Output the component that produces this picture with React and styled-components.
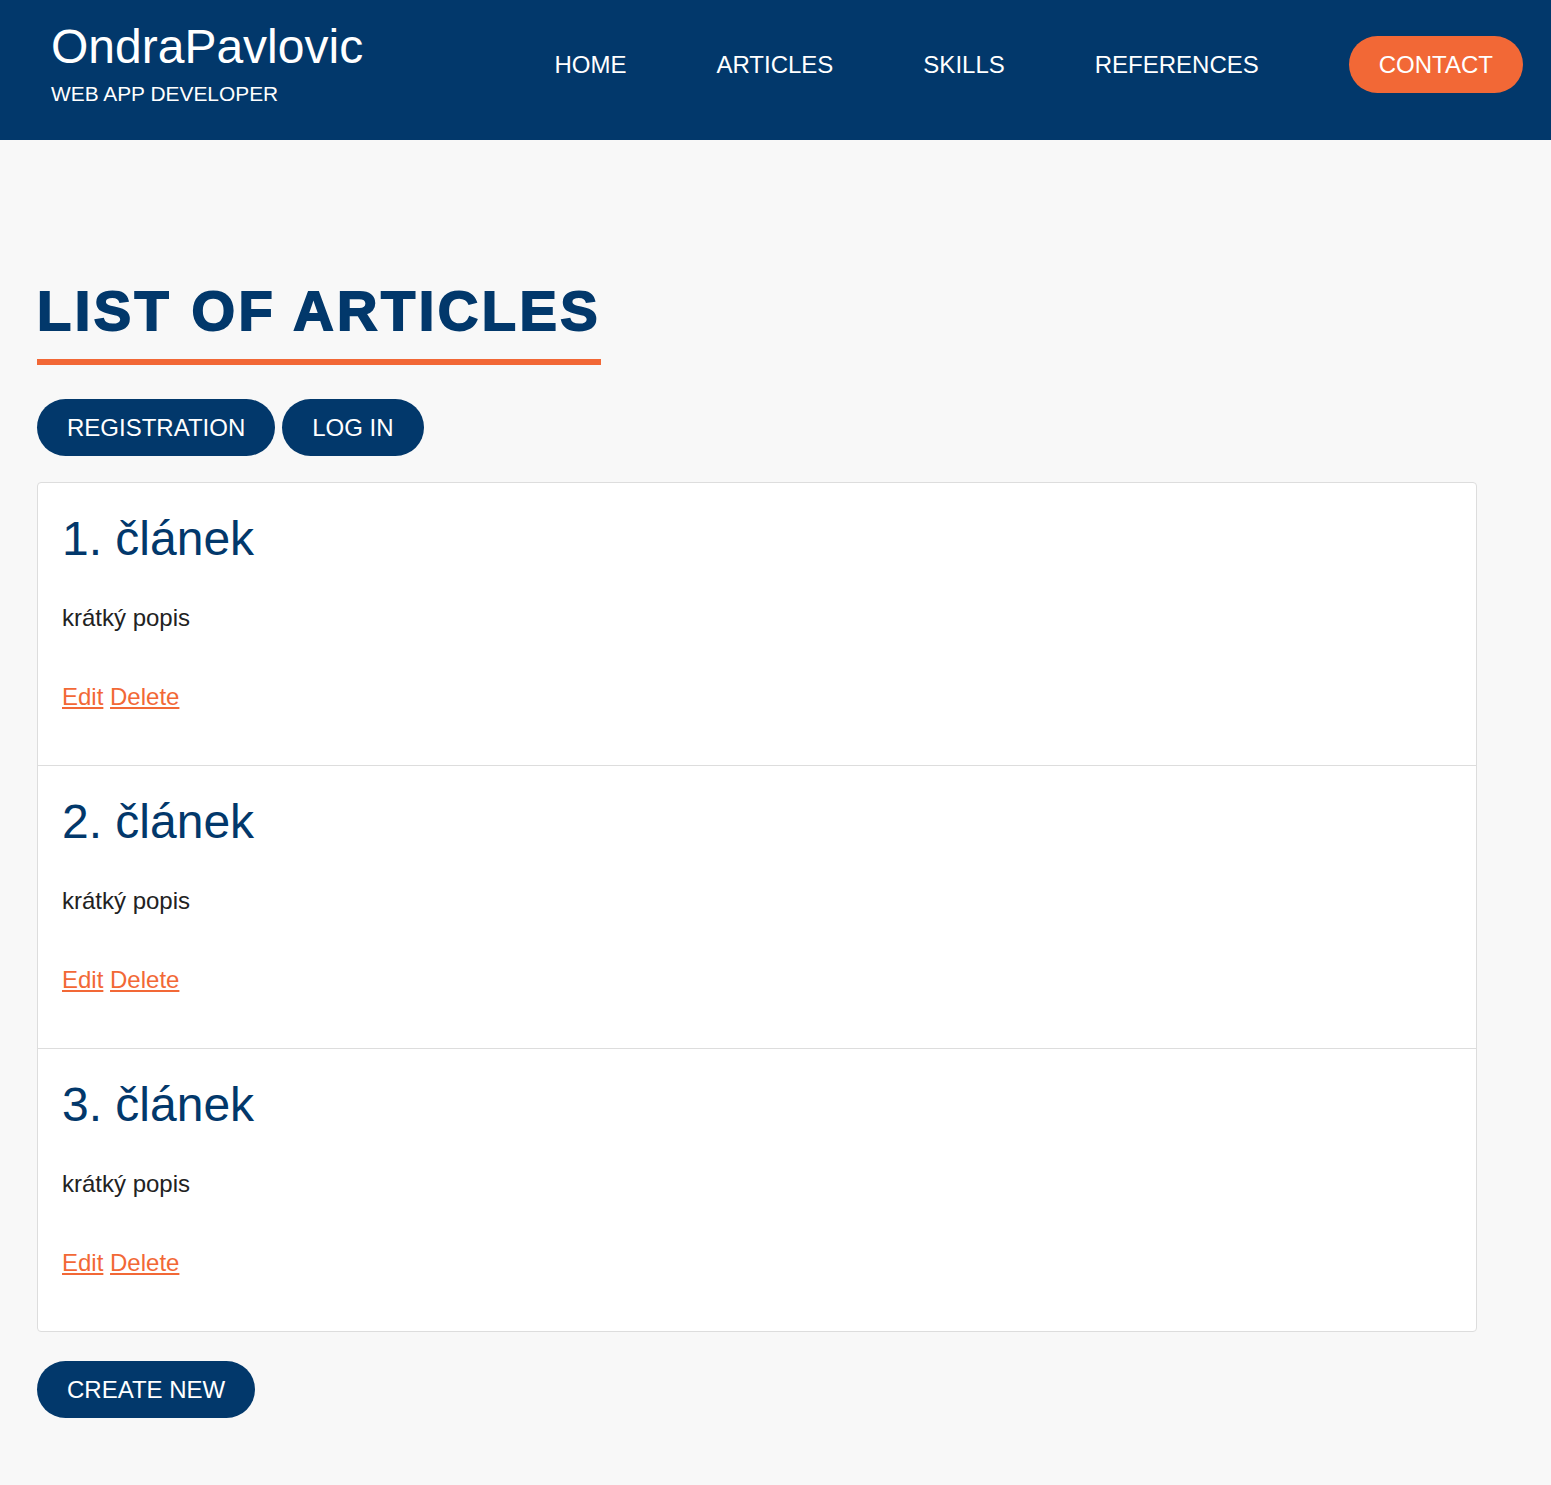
import React from 'react';
import styled, { createGlobalStyle } from 'styled-components';

const navy = '#02386b';
const orange = '#f26836';

const GlobalStyle = createGlobalStyle`
  html, body {
    margin: 0;
    padding: 0;
    background: #f8f8f8;
    font-family: "Liberation Sans", Arial, sans-serif;
  }
  * {
    box-sizing: border-box;
  }
`;

const Header = styled.header`
  display: flex;
  justify-content: space-between;
  align-items: flex-start;
  height: 140px;
  padding: 19px 28px 0 51px;
  background: ${navy};
  color: #fff;
`;

const Brand = styled.div`
  display: flex;
  flex-direction: column;
`;

const BrandName = styled.div`
  font-size: 48px;
  line-height: 55px;
`;

const BrandTag = styled.div`
  margin-top: 8px;
  font-size: 20.9px;
  line-height: 24px;
`;

const Nav = styled.nav`
  display: flex;
  align-items: center;
  gap: 90px;
  margin-top: 17px;
`;

const NavLink = styled.a`
  color: #fff;
  font-size: 24px;
  line-height: 27px;
  text-decoration: none;
`;

const Pill = styled.a`
  display: inline-block;
  padding: 15px 30px;
  border-radius: 29px;
  background: ${(p) => (p.$accent ? orange : navy)};
  color: #fff;
  font-size: 24px;
  line-height: 27px;
  text-decoration: none;
  white-space: nowrap;
`;

const Main = styled.main`
  padding: 139px 0 67px 37px;
`;

const Title = styled.h1`
  display: inline-block;
  margin: 0;
  padding-bottom: 16px;
  border-bottom: 6px solid ${orange};
  color: ${navy};
  font-size: 56px;
  line-height: 64px;
  font-weight: 900;
  letter-spacing: 3.5px;
  -webkit-text-stroke: 1.8px ${navy};
`;

const ButtonRow = styled.div`
  display: flex;
  gap: 7px;
  margin: 34px 0 26px;
`;

const Card = styled.div`
  width: 1440px;
  background: #fff;
  border: 1px solid #ddd;
  border-radius: 4px;
`;

const Item = styled.div`
  padding: 27px 24px 24px;
  & + & {
    border-top: 1px solid #ddd;
  }
`;

const ItemTitle = styled.h2`
  margin: 0 0 32px;
  color: ${navy};
  font-size: 48px;
  line-height: 57.6px;
  font-weight: 400;
`;

const ItemText = styled.p`
  margin: 0 0 43px;
  color: #222;
  font-size: 24px;
  line-height: 36px;
`;

const Actions = styled.p`
  margin: 0 0 26.4px;
  font-size: 24px;
  line-height: 36px;
`;

const ActionLink = styled.a`
  color: ${orange};
  text-decoration: underline;
`;

const Footer = styled.div`
  margin-top: 29px;
`;

const articles = [
  { id: 1, title: '1. článek', text: 'krátký popis' },
  { id: 2, title: '2. článek', text: 'krátký popis' },
  { id: 3, title: '3. článek', text: 'krátký popis' },
];

export default function App() {
  return (
    <>
      <GlobalStyle />
      <Header>
        <Brand>
          <BrandName>OndraPavlovic</BrandName>
          <BrandTag>WEB APP DEVELOPER</BrandTag>
        </Brand>
        <Nav>
          <NavLink href="#">HOME</NavLink>
          <NavLink href="#">ARTICLES</NavLink>
          <NavLink href="#">SKILLS</NavLink>
          <NavLink href="#">REFERENCES</NavLink>
          <Pill href="#" $accent>CONTACT</Pill>
        </Nav>
      </Header>

      <Main>
        <Title>LIST OF ARTICLES</Title>
        <ButtonRow>
          <Pill href="#">REGISTRATION</Pill>
          <Pill href="#">LOG IN</Pill>
        </ButtonRow>

        <Card>
          {articles.map((a) => (
            <Item key={a.id}>
              <ItemTitle>{a.title}</ItemTitle>
              <ItemText>{a.text}</ItemText>
              <Actions>
                <ActionLink href="#">Edit</ActionLink>{' '}
                <ActionLink href="#">Delete</ActionLink>
              </Actions>
            </Item>
          ))}
        </Card>

        <Footer>
          <Pill href="#">CREATE NEW</Pill>
        </Footer>
      </Main>
    </>
  );
}
